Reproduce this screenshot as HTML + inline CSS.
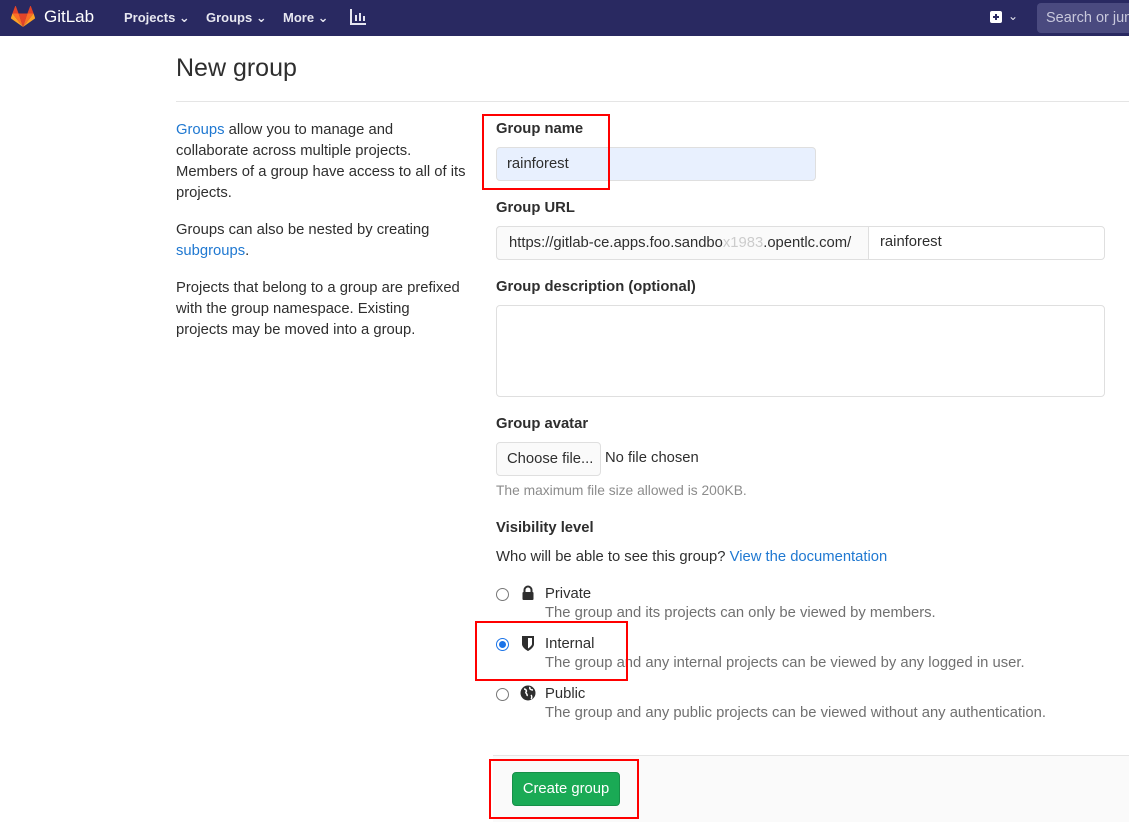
<!DOCTYPE html>
<html><head><meta charset="utf-8"><style>
*{box-sizing:border-box;margin:0;padding:0}
body{width:1129px;height:830px;overflow:hidden;background:#fff;font-family:"Liberation Sans","DejaVu Sans",sans-serif;font-size:14.8px;color:#2e2e2e;position:relative}
.a{position:absolute;white-space:nowrap}
.hdr{position:absolute;left:0;top:0;width:1129px;height:36px;background:#292961}
.nav{color:#e6e6f0;font-size:13px;font-weight:bold}
.lbl{font-weight:bold;font-size:14.8px}
a{color:#1f78d1;text-decoration:none}
.muted{color:#707070}
.red{position:absolute;border:2px solid #f00}
.inp{position:absolute;border:1px solid #dfdfdf;border-radius:4px}
</style></head><body>
<div class="hdr">
<svg class="a" style="left:11px;top:6px" width="24" height="22" viewBox="0 0 24 22"><path d="M12 21L16.4 7.5H7.6Z" fill="#e24329"/><path d="M12 21L7.6 7.5H1.4Z" fill="#fc6d26"/><path d="M1.4 7.5L0 11.8c-.1.4 0 .8.4 1L12 21Z" fill="#fca326"/><path d="M1.4 7.5H7.6L4.9.2c-.1-.4-.6-.4-.8 0Z" fill="#e24329"/><path d="M12 21L16.4 7.5H22.6Z" fill="#fc6d26"/><path d="M22.6 7.5L24 11.8c.1.4 0 .8-.4 1L12 21Z" fill="#fca326"/><path d="M22.6 7.5H16.4L19.1.2c.1-.4.6-.4.8 0Z" fill="#e24329"/></svg>
<div class="a" style="left:44px;top:7px;color:#fff;font-size:17px">GitLab</div>
<div class="a nav" style="left:124px;top:10px">Projects ⌄</div>
<div class="a nav" style="left:206px;top:10px">Groups ⌄</div>
<div class="a nav" style="left:283px;top:10px">More ⌄</div>
<svg class="a" style="left:350px;top:9px" width="17" height="16"><path d="M1 0V15H16" stroke="#e6e6f0" stroke-width="2" fill="none"/><path d="M6 6V12M10 4V12M14 7V12" stroke="#e6e6f0" stroke-width="2"/></svg>
<div class="a" style="left:990px;top:11px;width:12px;height:12px;background:#fff;border-radius:2px"></div>
<div class="a" style="left:993px;top:16px;width:6px;height:2px;background:#292961"></div>
<div class="a" style="left:995px;top:14px;width:2px;height:6px;background:#292961"></div>
<div class="a" style="left:1008px;top:9px;color:#e6e6f0;font-size:12px">⌄</div>
<div class="a" style="left:1037px;top:3px;width:100px;height:30px;background:#4a4a7f;border-radius:4px;color:#c8c8dc;padding:7px 9px;font-size:14.5px">Search or jump</div>
</div>
<div class="a" style="left:176px;top:54px;font-size:25px;color:#2e2e2e">New group</div>
<div class="a" style="left:176px;top:101px;width:953px;height:1px;background:#e5e5e5"></div>
<div class="a" style="left:176px;top:120px;line-height:21px">
<a>Groups</a> allow you to manage and<br>collaborate across multiple projects.<br>Members of a group have access to all of its<br>projects.<div style="height:16px"></div>Groups can also be nested by creating<br><a>subgroups</a>.<div style="height:16px"></div>Projects that belong to a group are prefixed<br>with the group namespace. Existing<br>projects may be moved into a group.</div>
<div class="a lbl" style="left:496px;top:121px">Group name</div>
<div class="inp" style="left:496px;top:147px;width:320px;height:34px;background:#e8f0fe;padding:8px 10px">rainforest</div>
<div class="red" style="left:482px;top:114px;width:128px;height:76px"></div>
<div class="a lbl" style="left:496px;top:200px">Group URL</div>
<div class="inp" style="left:496px;top:226px;width:609px;height:34px;background:#fff"></div>
<div class="inp" style="left:496px;top:226px;width:373px;height:34px;background:#fafafa;border-radius:4px 0 0 4px;padding:8px 12px;color:#2e2e2e;overflow:hidden;white-space:nowrap">https://gitlab-ce.apps.foo.sandbo<span style="color:#ccc">x1983</span>.opentlc.com/</div>
<div class="a" style="left:880px;top:234px">rainforest</div>
<div class="a lbl" style="left:496px;top:279px">Group description (optional)</div>
<div class="inp" style="left:496px;top:305px;width:609px;height:92px"></div>
<div class="a lbl" style="left:496px;top:416px">Group avatar</div>
<div class="inp" style="left:496px;top:442px;width:105px;height:34px;background:#fafafa;padding:8px 10px;white-space:nowrap;overflow:hidden">Choose file...</div>
<div class="a" style="left:605px;top:450px">No file chosen</div>
<div class="a muted" style="left:496px;top:483px;font-size:13.8px;color:#8c8c8c">The maximum file size allowed is 200KB.</div>
<div class="a lbl" style="left:496px;top:520px">Visibility level</div>
<div class="a" style="left:496px;top:549px">Who will be able to see this group? <a>View the documentation</a></div>
<div class="a" style="left:496px;top:588px;width:13px;height:13px;border:1px solid #777;border-radius:50%"></div>
<svg class="a" style="left:521px;top:585px" width="14" height="16"><path d="M3.5 7V5a3.5 3.5 0 0 1 7 0V7" stroke="#2e2e2e" stroke-width="2" fill="none"/><rect x="1.5" y="7" width="11" height="8" rx="1" fill="#2e2e2e"/></svg>
<div class="a" style="left:545px;top:586px">Private</div>
<div class="a muted" style="left:545px;top:605px">The group and its projects can only be viewed by members.</div>
<div class="a" style="left:496px;top:638px;width:13px;height:13px;border:1px solid #1a73e8;border-radius:50%"><div style="margin:2px;width:7px;height:7px;border-radius:50%;background:#1a73e8"></div></div>
<svg class="a" style="left:521px;top:635px" width="14" height="17"><path d="M1 1H13V9C13 13 7 16 7 16S1 13 1 9Z" fill="#2e2e2e"/><path d="M7 3H11V9C11 11 7 13.5 7 13.5Z" fill="#fff"/></svg>
<div class="a" style="left:545px;top:636px">Internal</div>
<div class="a muted" style="left:545px;top:655px">The group and any internal projects can be viewed by any logged in user.</div>
<div class="red" style="left:475px;top:621px;width:153px;height:60px"></div>
<div class="a" style="left:496px;top:688px;width:13px;height:13px;border:1px solid #777;border-radius:50%"></div>
<svg class="a" style="left:520px;top:685px" width="16" height="16"><circle cx="8" cy="8" r="7.5" fill="#2e2e2e"/><path d="M4 4C6 4 7 6 6 7S8 9 7 11M10 2C9 4 11 5 13 5M11 10C12 11 12 13 11 14" stroke="#fff" stroke-width="1.5" fill="none"/></svg>
<div class="a" style="left:545px;top:686px">Public</div>
<div class="a muted" style="left:545px;top:705px">The group and any public projects can be viewed without any authentication.</div>
<div class="a" style="left:493px;top:755px;width:636px;height:67px;background:#fafafa;border-top:1px solid #e5e5e5"></div>
<div class="a" style="left:512px;top:772px;width:108px;height:34px;background:#1aaa55;border:1px solid #168f48;border-radius:4px;color:#fff;text-align:center;line-height:33px">Create group</div>
<div class="red" style="left:489px;top:759px;width:150px;height:60px"></div>
</body></html>
